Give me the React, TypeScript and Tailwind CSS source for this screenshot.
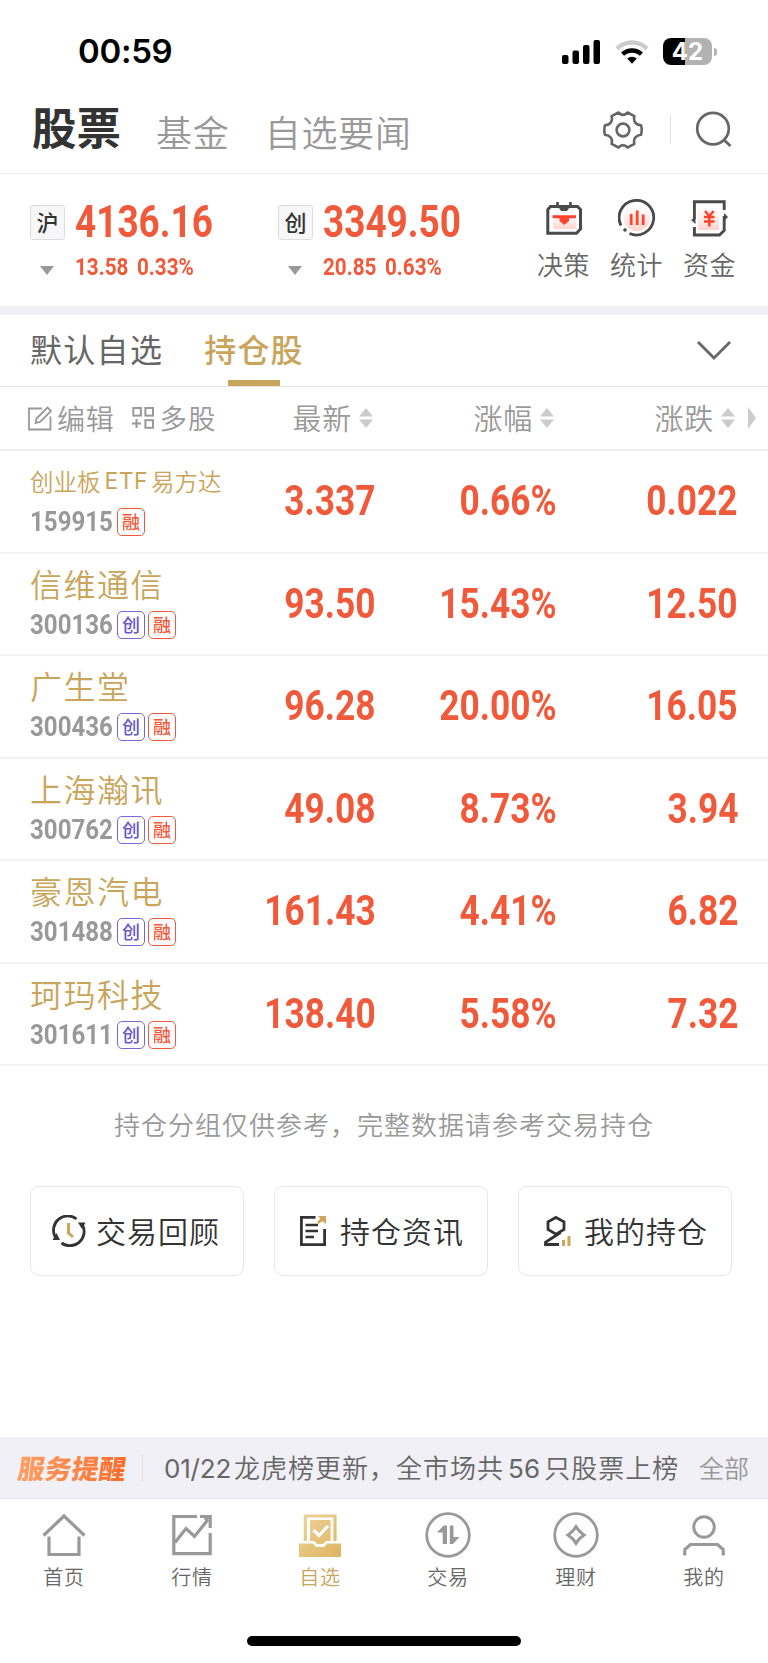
import type { ReactNode } from 'react'
import clsx from 'clsx'

type Stock = {
  name: string
  code: string
  tags: string[]
  price: string
  percent: string
  change: string
}

const stocks: Stock[] = [
  { name: '创业板ETF易方达', code: '159915', tags: ['融'], price: '3.337', percent: '0.66%', change: '0.022' },
  { name: '信维通信', code: '300136', tags: ['创', '融'], price: '93.50', percent: '15.43%', change: '12.50' },
  { name: '广生堂', code: '300436', tags: ['创', '融'], price: '96.28', percent: '20.00%', change: '16.05' },
  { name: '上海瀚讯', code: '300762', tags: ['创', '融'], price: '49.08', percent: '8.73%', change: '3.94' },
  { name: '豪恩汽电', code: '301488', tags: ['创', '融'], price: '161.43', percent: '4.41%', change: '6.82' },
  { name: '珂玛科技', code: '301611', tags: ['创', '融'], price: '138.40', percent: '5.58%', change: '7.32' },
]

function StatusBar() {
  return (
    <div className="flex h-[84px] items-center justify-between pt-[19px] pr-[51px] pl-[78px]">
      <span className="font-['Inter',sans-serif] text-[33px] leading-none font-semibold tracking-[-0.3px] text-black">00:59</span>
      <div className="flex items-center">
        <svg className="h-6 w-[39px]" viewBox="0 0 39 24">
          <rect x="0" y="15" width="6.5" height="9" rx="2" />
          <rect x="10.5" y="10.5" width="6.5" height="13.5" rx="2" />
          <rect x="21" y="5" width="6.5" height="19" rx="2" />
          <rect x="31.5" y="0" width="6.5" height="24" rx="2" />
        </svg>
        <svg className="ml-[14px] h-6 w-[34px]" viewBox="0 0 34 24" fill="none">
          <path d="M2 8.6 A21.5 21.5 0 0 1 32 8.6" stroke="#ccc" strokeWidth="4.4" />
          <path d="M7.6 14.2 A13.6 13.6 0 0 1 26.4 14.2" stroke="#000" strokeWidth="4.4" />
          <path d="M12.2 18.6 A7 7 0 0 1 21.8 18.6 L17 23.8 Z" fill="#000" />
        </svg>
        <div className="ml-[14px] flex h-[27px] w-[49px] items-center justify-center rounded-[8px] bg-linear-to-r from-black from-[44%] to-[#b2b2b2] to-[44%]">
          <span className="font-['Inter',sans-serif] text-[24px] leading-none font-bold text-white">42</span>
        </div>
        <span className="ml-[2px] h-2 w-[3px] rounded-r-full bg-[#b2b2b2]" />
      </div>
    </div>
  )
}

function Header() {
  return (
    <header className="flex h-[90px] items-center border-b border-[#ebebeb] pr-[36px] pl-8 leading-none">
      <div className="flex flex-1 items-center">
        <span className="-mt-[4px] text-[44.5px] font-bold text-[#333]">股票</span>
        <span className="mt-[4px] ml-[35px] text-[36px] font-[350] tracking-[0.8px] text-[#999]">基金</span>
        <span className="mt-[4px] ml-[35px] text-[36px] font-[350] tracking-[0.8px] text-[#999]">自选要闻</span>
      </div>
      <svg className="mt-[3px] h-[38px] w-10" viewBox="0 0 40 38" fill="none" stroke="#666" strokeWidth="2.6" strokeLinejoin="round">
        <path d="M15.5 1.5 Q20 6.3 24.5 1.5 L31.4 5.2 C30 10.5 33 14 38 14.2 Q39.4 19 38 23.8 C33 24.2 30 27.5 31.4 32.8 L24.5 36.5 Q20 31.7 15.5 36.5 L8.6 32.8 C10 27.5 7 24.2 2 23.8 Q.6 19 2 14.2 C7 14 10 10.5 8.6 5.2 Z" />
        <circle cx="20" cy="19" r="6.4" />
      </svg>
      <span className="mt-[3px] ml-[27px] h-7 w-px bg-[#ddd]" />
      <svg className="mt-[3px] ml-6 h-[38px] w-[37px]" viewBox="0 0 37 38" fill="none" stroke="#666" strokeWidth="2.7">
        <circle cx="18" cy="17.6" r="15.8" />
        <path d="M28.5 28.5 L35.5 35" />
      </svg>
    </header>
  )
}

function IndexQuote({ badge, value, diff, percent }: { badge: string; value: string; diff: string; percent: string }) {
  return (
    <div className="flex w-[248px] flex-col leading-none">
      <div className="flex h-[44px] items-center">
        <span className="flex h-[35px] w-[35px] shrink-0 items-center justify-center rounded-[3px] border border-[#ddd] bg-[#f7f7fa] pb-[2px] text-[22px] font-medium text-[#333]">
          {badge}
        </span>
        <span className="ml-[10px] origin-left scale-x-[0.84] font-['Roboto',sans-serif] text-[44px] font-bold text-[#f0593a]">
          {value}
        </span>
      </div>
      <div className="mt-[11px] flex items-center">
        <svg className="mt-[7px] ml-[10px] h-[9px] w-[14px]" viewBox="0 0 14 9" fill="#999">
          <path d="M0 0 H14 L7 9 Z" />
        </svg>
        <span className="ml-[21px] w-[62px] origin-left scale-x-[0.86] font-['Roboto',sans-serif] text-[24px] font-bold text-[#f0593a]">
          {diff}
        </span>
        <span className="origin-left scale-x-[0.86] font-['Roboto',sans-serif] text-[24px] font-bold text-[#f0593a]">{percent}</span>
      </div>
    </div>
  )
}

function Shortcut({ label, children }: { label: string; children: ReactNode }) {
  return (
    <div className="flex w-[73px] flex-col items-center gap-[14px]">
      <svg className="h-[38px] w-[38px]" viewBox="0 0 38 38" fill="none">
        {children}
      </svg>
      <span className="text-[26px] leading-none font-[350] tracking-[0.5px] text-[#666]">{label}</span>
    </div>
  )
}

function IndexBar() {
  return (
    <section className="flex h-[132px] items-start pt-[26px] pl-[30px]">
      <IndexQuote badge="沪" value="4136.16" diff="13.58" percent="0.33%" />
      <IndexQuote badge="创" value="3349.50" diff="20.85" percent="0.63%" />
      <div className="-mt-px ml-px flex">
        <Shortcut label="决策">
          <defs>
            <linearGradient id="glow" x1="0" y1="0" x2="0" y2="1">
              <stop offset="0" stopColor="#fff" />
              <stop offset="0.5" stopColor="#fff0ee" />
              <stop offset="1" stopColor="#ffd3cd" />
            </linearGradient>
          </defs>
          <rect x="8" y="13" width="23" height="17" rx="2" fill="url(#glow)" />
          <path d="M12.5 3 V8 M25.5 3 V8" stroke="#4a4a4a" strokeWidth="2.6" />
          <path d="M5.5 7.4 H32.5 L35.5 10.5 V30 L31.5 34.2 H2.8 V10.5 Z" stroke="#4a4a4a" strokeWidth="3" />
          <path d="M12.5 6.5 H26 L22 12 H16 Z" fill="#4a4a4a" />
          <path d="M7.5 16.3 H31 V19.3 H24 V22 L19.3 26 L14.5 22 V19.3 H7.5 Z" fill="#ff432d" />
        </Shortcut>
        <Shortcut label="统计">
          <circle cx="19" cy="18.5" r="13.5" fill="url(#glow)" />
          <path d="M11.5 34.5 A17.3 17.3 0 1 0 3 26.5" stroke="#4a4a4a" strokeWidth="2.8" />
          <circle cx="7" cy="31" r="1.8" fill="#4a4a4a" />
          <path d="M13.2 15 V26 M19.2 11.5 V26 M25.2 15.5 V26" stroke="#ff432d" strokeWidth="2.8" />
        </Shortcut>
        <Shortcut label="资金">
          <rect x="7" y="7" width="21" height="24" fill="url(#glow)" />
          <path d="M33.2 11 V2.8 H3.4 V20 M3.4 28 V36 H28.5 L33.2 31.5 V17" stroke="#4a4a4a" strokeWidth="2.9" />
          <path d="M4.5 18 V25 L0 21 Z M33 22 V14 L37 18 Z" fill="#4a4a4a" />
          <path d="M14 12 L18.3 17 L22.6 12 M13 18 H23.6 M13 22.5 H23.6 M18.3 17 V27.5" stroke="#ff432d" strokeWidth="2.5" />
        </Shortcut>
      </div>
    </section>
  )
}

function GroupTabs() {
  return (
    <nav className="flex h-[72px] items-stretch border-b border-[#e6e6e6] pr-[37px] pl-[30px] text-[32px] leading-none">
      <span className="flex items-center pb-[5px] tracking-[1.3px] text-[#666]">默认自选</span>
      <span className="ml-[41px] flex flex-col items-center pt-[17px] text-[#c9a55c]">
        <span className="font-medium tracking-[1.2px]">持仓股</span>
        <span className="mt-auto h-[6px] w-[52px] bg-[#c9a55c]" />
      </span>
      <svg className="mt-[26px] ml-auto h-[19px] w-[34px]" viewBox="0 0 34 19" fill="none" stroke="#666" strokeWidth="2.8">
        <path d="M1 1 L17 17 L33 1" />
      </svg>
    </nav>
  )
}

function SortHead({ label }: { label: string }) {
  return (
    <div className="flex w-[181px] items-center justify-end gap-[7px] pr-[4px]">
      <span className="-mt-px text-[29px] font-[350] tracking-[0.8px]">{label}</span>
      <svg className="h-5 w-[14px]" viewBox="0 0 14 20" fill="#ccc">
        <path d="M7 0 L14 8.5 H0 Z M0 11.5 H14 L7 20 Z" />
      </svg>
    </div>
  )
}

function TableHead() {
  return (
    <div className="flex h-[64px] items-center border-b-2 border-[#eee] leading-none text-[#999]">
      <div className="flex w-[196px] shrink-0 items-center pl-7 whitespace-nowrap">
        <svg className="h-[25px] w-6 shrink-0" viewBox="0 0 24 25" fill="none" stroke="#999" strokeWidth="1.8">
          <path d="M14 2.5 H1 V23.5 H22.5 V10.5" />
          <path d="M7.5 17 L8.5 12.5 L19.5 1.5 L23 5 L12 16 Z" />
        </svg>
        <span className="-mt-px ml-[5px] text-[28px] font-[350] tracking-[0.8px]">编辑</span>
        <svg className="ml-[16px] h-6 w-6 shrink-0" viewBox="0 0 24 24" fill="none" stroke="#999" strokeWidth="2">
          <rect x="2.3" y="2" width="7.6" height="7.6" />
          <rect x="14.4" y="2" width="7.6" height="7.6" />
          <rect x="14.4" y="14.2" width="7.6" height="7.6" />
          <path d="M5.5 13 V22 M1 17.5 H10" />
        </svg>
        <span className="-mt-px ml-[5px] text-[27.5px] font-[350] tracking-[0.8px]">多股</span>
      </div>
      <SortHead label="最新" />
      <SortHead label="涨幅" />
      <SortHead label="涨跌" />
      <svg className="ml-[9px] h-[22px] w-2" viewBox="0 0 8 22" fill="#ccc">
        <path d="M0 0 L8 11 L0 22 Z" />
      </svg>
    </div>
  )
}

function Cell({ children }: { children: string }) {
  return (
    <div className="w-[181px] pr-px text-right">
      <span className="inline-block origin-right scale-x-[0.84] font-['Roboto',sans-serif] text-[42px] leading-none font-bold text-[#f0593a]">
        {children}
      </span>
    </div>
  )
}

function StockRow({ stock }: { stock: Stock }) {
  const long = stock.name.length > 5
  return (
    <div className="flex h-[102.5px] items-center border-b-2 border-[#f3f3f5]">
      <div className="flex w-[196px] shrink-0 flex-col pl-[30px]">
        <span
          className={clsx(
            '-mt-[3px] flex h-9 items-center leading-none font-[350] whitespace-nowrap text-[#c9a55c]',
            long ? 'text-[23.5px]' : 'pb-[2px] text-[32px] tracking-[1.5px]',
          )}
        >
          {stock.name.split(/([A-Z]+)/).map((part) => (
            <span
              key={part}
              className={clsx(/[A-Z]/.test(part) && "mr-[3px] ml-1 font-['Inter',sans-serif] text-[23px] font-normal tracking-[0.4px]")}
            >
              {part}
            </span>
          ))}
        </span>
        <div className="mt-[9px] flex items-center">
          <span className="w-[87px] shrink-0">
            <span className="inline-block origin-left scale-x-[0.86] font-['Roboto',sans-serif] text-[28px] leading-none font-bold text-[#999]">
              {stock.code}
            </span>
          </span>
          {stock.tags.map((tag) => (
            <span
              key={tag}
              className={clsx(
                'mr-[3px] flex h-7 w-7 shrink-0 items-center justify-center rounded-[5px] border pb-[2px] text-[18px] leading-none font-medium',
                tag === '创' ? 'border-[#7668d8] text-[#6655d0]' : 'border-[#f0593a] text-[#f0593a]',
              )}
            >
              {tag}
            </span>
          ))}
        </div>
      </div>
      <Cell>{stock.price}</Cell>
      <Cell>{stock.percent}</Cell>
      <Cell>{stock.change}</Cell>
    </div>
  )
}

function ActionCard({ label, children }: { label: string; children: ReactNode }) {
  return (
    <div className="flex h-[90px] w-[214px] items-center rounded-[9px] border border-[#e8e8e8] pl-[21px]">
      <svg className="h-8 w-[34px]" viewBox="0 0 34 32" fill="none">
        {children}
      </svg>
      <span className="-mt-[3px] ml-[10px] text-[30px] leading-none font-[350] tracking-[1px] text-[#333]">{label}</span>
    </div>
  )
}

function Actions() {
  return (
    <div className="mt-[49px] flex gap-[30px] pl-[30px]">
      <ActionCard label="交易回顾">
        <path d="M24.5 4 A14.2 14.2 0 0 0 3 21.5 M9.5 28 A14.2 14.2 0 0 0 30.5 10" stroke="#333" strokeWidth="2.8" />
        <path d="M.5 25 H8 L4.5 18 Z M26 7.5 H33.5 L30 14 Z" fill="#333" />
        <path d="M16.5 8 V18 L21 22" stroke="#d0a45a" strokeWidth="3" />
      </ActionCard>
      <ActionCard label="持仓资讯">
        <path d="M19.5 2.4 H5.4 V29.6 H28.6 V14" stroke="#333" strokeWidth="2.8" />
        <path d="M9.5 10 H22 M9.5 16 H22 M9.5 22 H18" stroke="#333" strokeWidth="2.6" />
        <path d="M22 1 H30 V9 L26.5 6 L22.5 9 L21 7 L24.5 3.5 Z" fill="#d0a45a" />
      </ActionCard>
      <ActionCard label="我的持仓">
        <path d="M16 2.4 L24 6.8 V14.5 L16 19.2 L8 14.5 V6.8 Z" stroke="#333" strokeWidth="2.8" />
        <path d="M20.5 17.5 L5.5 27.2 V29.5 H19" stroke="#333" strokeWidth="2.8" />
        <path d="M23.5 25 V31 M29 21 V31" stroke="#d0a45a" strokeWidth="3" />
      </ActionCard>
    </div>
  )
}

function ServiceNotice() {
  return (
    <div className="mt-auto flex h-[62px] items-center border-b border-[#e4e4ec] bg-[#f1f0f6] leading-none whitespace-nowrap">
      <span className="ml-[18px] -skew-x-8 bg-linear-to-r from-[#ff9f63] to-[#fb6c28] bg-clip-text text-[27px] font-black text-transparent">
        服务提醒
      </span>
      <span className="ml-[16px] h-[26px] w-px bg-[#f0dcc4]" />
      <span className="ml-[21px] flex-1 text-[26px] font-[350] tracking-[1px] text-[#666]">
        <span className="mr-[3px] font-['Inter',sans-serif] font-normal tracking-[-0.2px]">01/22</span>
        龙虎榜更新，全市场共
        <span className="mx-1 font-['Inter',sans-serif] font-normal tracking-[0.1px]">56</span>
        只股票上榜
      </span>
      <span className="mr-[19px] text-[25px] font-[350] text-[#999]">全部</span>
    </div>
  )
}

function TabItem({ label, active, children }: { label: string; active?: boolean; children: ReactNode }) {
  return (
    <div className="flex w-32 flex-col items-center">
      <svg className="h-12 w-12" viewBox="0 0 48 48" fill="none" stroke="#999" strokeWidth="3.2">
        {children}
      </svg>
      <span className={clsx('mt-[9px] text-[20px] leading-none font-[350] tracking-[0.8px]', active ? 'text-[#c9a55c]' : 'text-[#666]')}>
        {label}
      </span>
    </div>
  )
}

function TabBar() {
  return (
    <footer className="flex h-[137px] pt-[11px]">
      <TabItem label="首页">
        <path d="M3.5 25.5 L24 6 L44.5 25.5" />
        <path d="M9 26.5 V44.5 H39 V26.5" />
      </TabItem>
      <TabItem label="行情">
        <path d="M29 6.5 H5.8 V43.7 H42.2 V23" />
        <path d="M7 32.5 L18 18.5 L26.5 26.5 L40 9.5" />
        <path d="M32 6.5 H42.2 V18 M37 10 L41 6" />
      </TabItem>
      <TabItem label="自选" active>
        <defs>
          <linearGradient id="gold" gradientUnits="userSpaceOnUse" x1="3" y1="4" x2="45" y2="46">
            <stop stopColor="#edd49c" />
            <stop offset="1" stopColor="#dfb460" />
          </linearGradient>
        </defs>
        <path d="M9.3 31 V6 H39 V31" stroke="url(#gold)" strokeWidth="3.2" />
        <path d="M14 10 H34.5 V31 H30 L27 34 H21 L18 31 H14 Z" fill="url(#gold)" stroke="none" />
        <path d="M17.5 20 L23 25.5 L32 16" stroke="#fff" strokeWidth="3.2" />
        <path d="M3 33.5 H17 L20 37 H28.5 L31 33.5 H45 V47 H3 Z" fill="url(#gold)" stroke="none" />
      </TabItem>
      <TabItem label="交易">
        <circle cx="24" cy="25" r="21.3" strokeWidth="2.8" />
        <path d="M13 22.5 L19.5 15.5 H23 V34 H18.7 V22.5 Z M25.8 15.5 H29.5 V27 H35.5 L29 34 H25.8 Z" fill="#999" stroke="none" />
      </TabItem>
      <TabItem label="理财">
        <circle cx="24" cy="25" r="21.3" strokeWidth="2.8" />
        <path d="M24 16.8 Q27 21.8 32 25 Q27 28.2 24 33.2 Q21 28.2 16 25 Q21 21.8 24 16.8 Z" />
      </TabItem>
      <TabItem label="我的">
        <circle cx="24" cy="17" r="10.3" strokeWidth="3" />
        <path d="M4.8 45.5 V39.5 L10.5 34.5 H37.5 L43.2 39.5 V45.5" />
      </TabItem>
    </footer>
  )
}

export default function App() {
  return (
    <div className="flex h-[1663px] w-[768px] flex-col overflow-hidden bg-white font-['Noto_Sans_CJK_SC',sans-serif]">
      <StatusBar />
      <Header />
      <IndexBar />
      <div className="h-[9px] shrink-0 bg-[#f1f0f6]" />
      <GroupTabs />
      <TableHead />
      <div>
        {stocks.map((stock) => (
          <StockRow key={stock.code} stock={stock} />
        ))}
      </div>
      <p className="mt-[45px] text-center text-[26px] leading-none font-[350] tracking-[1px] text-[#999]">
        持仓分组仅供参考，完整数据请参考交易持仓
      </p>
      <Actions />
      <ServiceNotice />
      <TabBar />
      {/* Home indicator */}
      <div className="mb-[17px] h-[10px] w-[274px] shrink-0 self-center rounded-full bg-black" />
    </div>
  )
}
